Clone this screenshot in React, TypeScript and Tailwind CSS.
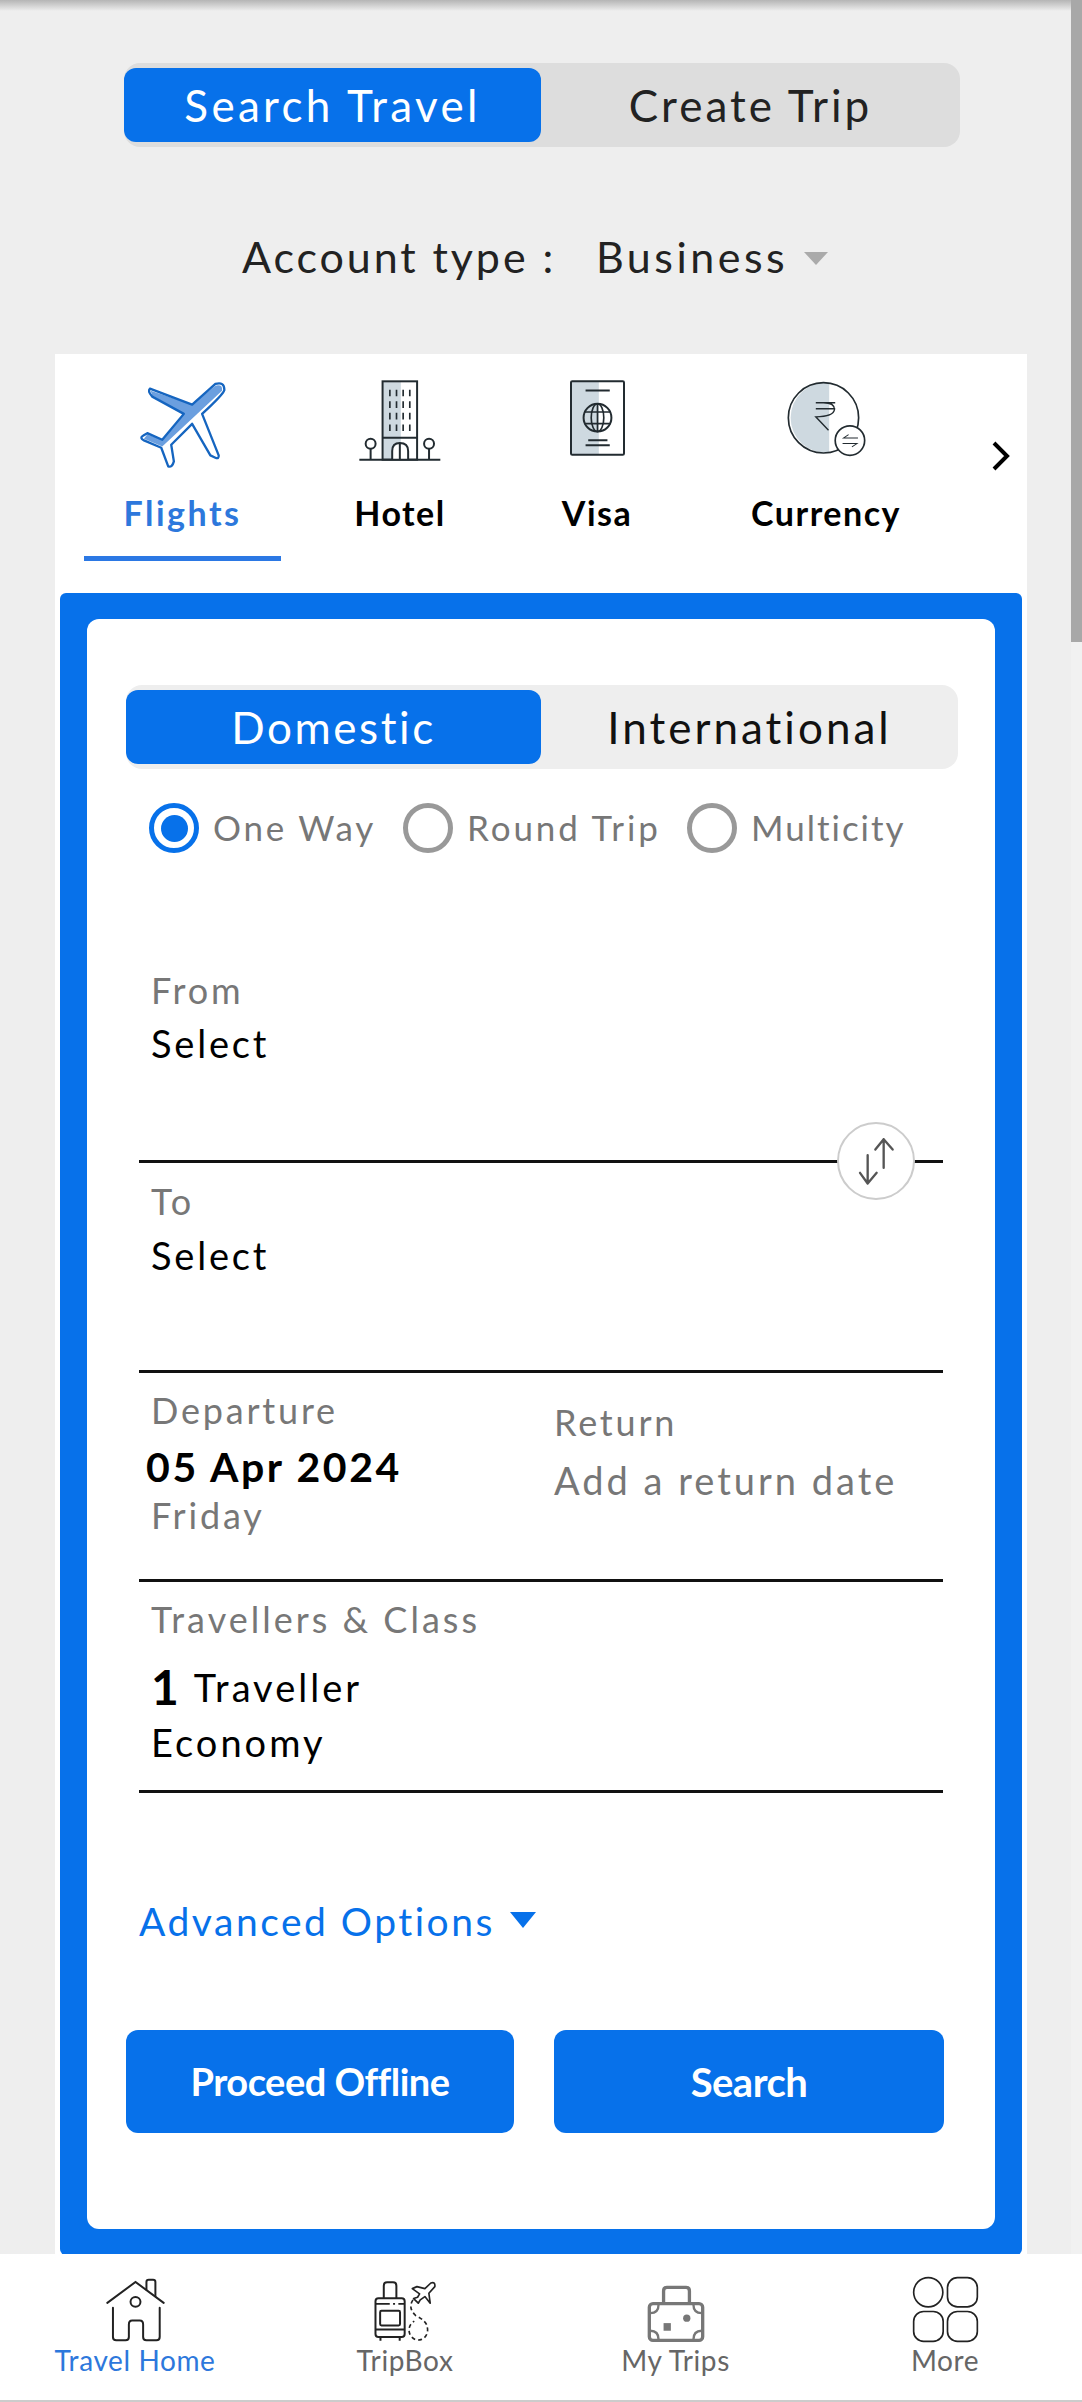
import { FC, ReactNode } from "react";

const PlaneIcon: FC = () => (
  <svg viewBox="115 58 265 268" className="h-[89px] w-[88px]">
    <path d="M150 90 L275 132 L345 75 Q368 70 365 90 L185 258 L130 235 L140 222 L185 238 L250 160 L155 105 Z" fill="#6b9fdf" />
    <path
      d="M345 70 Q372 62 372 88 Q370 100 305 160 L355 285 Q356 297 345 292 L330 285 L275 190 L212 253 L220 303 Q215 322 203 318 L182 262 L130 240 Q115 232 128 225 L140 218 L185 238 L250 160 L155 108 Q140 92 148 84 L275 132 Z"
      fill="none"
      stroke="#1565c0"
      strokeWidth="7"
      strokeLinejoin="round"
    />
  </svg>
);

const HotelIcon: FC = () => (
  <svg viewBox="778 58 245 244" className="h-[81px] w-[82px]" fill="none" stroke="#222b30" strokeWidth="6">
    <rect x="848" y="62" width="55" height="236" fill="#ced9e0" stroke="none" />
    <rect x="848" y="62" width="104" height="236" />
    <path d="M848 232 H952" />
    <path d="M870 87 V107 M890 87 V107 M910 87 V107 M930 87 V107 M870 122 V142 M890 122 V142 M910 122 V142 M930 122 V142 M870 157 V177 M890 157 V177 M910 157 V177 M930 157 V177 M870 192 V212 M890 192 V212 M910 192 V212 M930 192 V212" strokeWidth="5" />
    <path d="M877 298 V272 Q877 248 900 248 Q925 248 925 272 V298 M900 248 V298" fill="#ffffff" />
    <circle cx="812" cy="250" r="15" />
    <circle cx="988" cy="250" r="15" />
    <path d="M812 265 V298 M988 265 V298 M778 298 H1022" />
  </svg>
);

const VisaIcon: FC = () => (
  <svg viewBox="95 59 166 228" className="h-[76px] w-[55px]" fill="none" stroke="#222b30" strokeWidth="6">
    <rect x="98" y="62" width="84" height="222" fill="#ced9e0" stroke="none" />
    <rect x="98" y="62" width="160" height="222" rx="4" />
    <path d="M142 90 H215 M150 240 H208 M142 255 H215" />
    <circle cx="178" cy="172" r="42" />
    <ellipse cx="178" cy="172" rx="19" ry="42" strokeWidth="5" />
    <path d="M178 130 V214 M138 155 H218 M138 190 H218" strokeWidth="5" />
  </svg>
);

const CurrencyIcon: FC = () => (
  <svg viewBox="746 62 236 230" className="h-[77px] w-[79px]" fill="none" stroke="#222b30" strokeWidth="5">
    <path d="M872 70 A105 105 0 1 0 872 279 Z" fill="#ced9e0" stroke="none" />
    <circle cx="855" cy="175" r="105" />
    <path d="M832 130 H890 M832 148 H890 M855 130 Q888 130 888 150 Q885 172 832 172 L870 212" strokeWidth="4" />
    <circle cx="934" cy="243" r="44" fill="#ffffff" />
    <path d="M958 235 H915 L930 225 M912 252 H955 L940 262" strokeWidth="3" />
  </svg>
);

const SwapIcon: FC = () => (
  <svg viewBox="170 100 120 155" className="h-[52px] w-[40px]" fill="none" stroke="#555555" strokeWidth="7" strokeLinecap="round" strokeLinejoin="round">
    <path d="M253 198 V112 M228 143 L253 112 L280 143" />
    <path d="M205 160 V245 M182 213 L205 245 L232 213" />
  </svg>
);

const HomeIcon: FC = () => (
  <svg viewBox="130 45 190 200" className="h-[67px] w-[63px]" fill="none" stroke="#222222" strokeWidth="6" strokeLinecap="round">
    <path d="M140 125 L225 62 L310 125" />
    <path d="M258 85 V62 Q258 55 265 55 H278 Q285 55 285 62 V105" />
    <circle cx="225" cy="122" r="15" />
    <path d="M157 140 V228 Q157 238 167 238 H195 Q205 238 205 228 V190 Q205 178 215 178 H238 Q248 178 248 190 V228 Q248 238 258 238 H288 Q298 238 298 228 V140" />
  </svg>
);

const TripBoxIcon: FC = () => (
  <svg viewBox="938 48 192 190" className="h-[63px] w-[64px]" fill="none" stroke="#222222" strokeWidth="6">
    <path d="M970 103 V65 Q970 55 980 55 H998 Q1008 55 1008 65 V103" />
    <rect x="945" y="103" width="88" height="117" rx="9" />
    <path d="M945 120 H988 M998 120 H1004 M1014 120 H1033 M945 197 H1033 M960 220 V231 M1018 220 V231" />
    <rect x="959" y="141" width="60" height="44" rx="4" />
    <path d="M1112 57 Q1126 52 1124 68 L1106 88 L1110 118 L1094 98 L1080 108 L1074 118 L1060 104 L1072 100 L1078 90 L1056 74 L1070 68 L1094 74 Z" strokeWidth="5" strokeLinejoin="round" />
    <path d="M1058 108 Q1042 132 1066 155 Q1100 172 1101 190 A28 30 0 1 1 1062 172" strokeWidth="5" strokeDasharray="12 9" />
  </svg>
);

const MyTripsIcon: FC = () => (
  <svg viewBox="140 58 175 176" className="h-[59px] w-[58px]" fill="none" stroke="#777777" strokeWidth="10">
    <path d="M190 115 V78 Q190 67 200 67 H258 Q268 67 268 78 V115" />
    <rect x="147" y="116" width="161" height="111" rx="11" />
    <path d="M150 145 Q175 145 175 118 M305 145 Q280 145 280 118 M150 198 Q175 198 175 225 M305 198 Q280 198 280 225" strokeWidth="7" />
    <circle cx="260" cy="160" r="11" fill="#777777" stroke="none" />
    <rect x="190" y="175" width="22" height="23" fill="#777777" stroke="none" />
  </svg>
);

const MoreIcon: FC = () => (
  <svg viewBox="938 45 202 202" className="h-[67px] w-[67px]" fill="none" stroke="#222222" strokeWidth="5">
    <circle cx="987" cy="94" r="44" />
    <rect x="1045" y="50" width="90" height="88" rx="30" />
    <rect x="943" y="152" width="89" height="90" rx="30" />
    <rect x="1045" y="152" width="90" height="90" rx="30" />
  </svg>
);

const Radio: FC<{ active?: boolean; label: string; labelClass: string }> = ({ active, label, labelClass }) => (
  <>
    <span className={`flex h-[50px] w-[50px] shrink-0 items-center justify-center rounded-full border-[5px] ${active ? "border-[#0771ea]" : "border-[#999999]"}`}>
      {active && <span className="h-[27px] w-[27px] rounded-full bg-[#0771ea]" />}
    </span>
    <span className={`mb-[3px] ml-[14px] text-[35px] leading-[50px] whitespace-nowrap text-[#777777] ${labelClass}`}>{label}</span>
  </>
);

const TabItem: FC<{ icon: ReactNode; label: string; width: string; active?: boolean }> = ({ icon, label, width, active }) => (
  <div className={`flex shrink-0 flex-col items-center ${width}`}>
    <div className="flex h-[90px] items-start justify-center">{icon}</div>
    <div className={`mt-[23px] text-[34px] leading-[40px] font-bold ${active ? "tracking-[2.5px] text-[#2d78dc]" : "tracking-[1.5px] text-black"}`}>{label}</div>
    <div className={`mt-[23px] h-[5px] w-full ${active ? "bg-[#2b78e4]" : ""}`} />
  </div>
);

const NavItem: FC<{ icon: ReactNode; label: string; width: string; active?: boolean }> = ({ icon, label, width, active }) => (
  <div className={`flex shrink-0 flex-col items-center ${width}`}>
    <div className="flex h-[68px] items-end justify-center">{icon}</div>
    <div className={`-mt-[1px] text-[28px] leading-[36px] tracking-[0.6px] whitespace-nowrap ${active ? "text-[#2d78dc]" : "text-[#666666]"}`}>{label}</div>
  </div>
);

const App: FC = () => {
  return (
    <div className="flex h-[2402px] w-[1082px] flex-col overflow-hidden bg-[#eeeeee] font-['Lato',sans-serif]">
      <div className="flex min-h-0 flex-1">
        <div className="min-w-0 flex-1">
          <div className="h-[11px] bg-gradient-to-b from-[#b5b5b5] to-[#eeeeee]" />

          {/* trip type toggle */}
          <div className="mt-[52px] ml-[124px] flex h-[84px] w-[836px] items-center rounded-[16px] bg-[#dddddd]">
            <div className="flex h-[74px] w-[417px] items-center justify-center rounded-[12px] bg-[#0771ea] text-[44px] tracking-[3.3px] text-white">
              Search Travel
            </div>
            <div className="flex-1 text-center text-[44px] tracking-[3px] text-[#222222]">Create Trip</div>
          </div>

          {/* account type */}
          <div className="mt-[85px] flex h-[50px] items-center pl-[242px] text-[43px] tracking-[2.9px] text-[#222222]">
            <span className="w-[354px] whitespace-nowrap">Account type :</span>
            <span className="w-[208px] tracking-[3.5px]">Business</span>
            <span className="mt-[3px] h-0 w-0 border-x-[12px] border-t-[13px] border-x-transparent border-t-[#aaaaaa]" />
          </div>

          <div className="mt-[72px] ml-[55px] w-[972px] bg-white">
            {/* service tabs */}
            <div className="flex h-[234px] pt-[26px] pl-[29px]">
              <TabItem icon={<PlaneIcon />} label="Flights" width="w-[197px]" active />
              <TabItem icon={<HotelIcon />} label="Hotel" width="w-[238px]" />
              <TabItem icon={<VisaIcon />} label="Visa" width="w-[156px]" />
              <TabItem icon={<CurrencyIcon />} label="Currency" width="w-[302px]" />
              <svg viewBox="0 0 19 30" className="mt-[61px] ml-[14px] h-[30px] w-[19px]" fill="none" stroke="#000000" strokeWidth="4">
                <path d="M3 2 L16 15 L3 28" />
              </svg>
            </div>

            <div className="mx-[5px] mt-[5px] rounded-[6px] bg-[#0771ea] px-[27px] pt-[26px] pb-[26px]">
              <div className="rounded-[12px] bg-white pt-[66px] pb-[96px]">
                {/* domestic / international */}
                <div className="ml-[39px] flex h-[84px] w-[832px] items-center rounded-[16px] bg-[#eeeeee]">
                  <div className="flex h-[74px] w-[415px] items-center justify-center rounded-[12px] bg-[#0771ea] text-[44px] tracking-[2.6px] text-white">
                    Domestic
                  </div>
                  <div className="flex-1 text-center text-[44px] tracking-[3px] text-[#111111]">International</div>
                </div>

                <div className="mt-[34px] ml-[62px] flex h-[50px] items-center">
                  <Radio active label="One Way" labelClass="w-[190px] tracking-[2.8px]" />
                  <Radio label="Round Trip" labelClass="w-[220px] tracking-[2.9px]" />
                  <Radio label="Multicity" labelClass="w-[151px] tracking-[2px]" />
                </div>

                <div className="mt-[117px] ml-[52px] w-[804px]">
                  {/* from */}
                  <div className="relative h-[193px] border-b-[3px] border-[#111111] pl-[12px]">
                    <div className="text-[36px] leading-[40px] tracking-[2.8px] text-[#777777]">From</div>
                    <div className="mt-[13px] text-[38px] leading-[40px] tracking-[2.8px] text-black">Select</div>
                    <div className="absolute right-[28px] bottom-[-40px] flex h-[78px] w-[78px] items-center justify-center rounded-full border-2 border-[#cccccc] bg-white">
                      <SwapIcon />
                    </div>
                  </div>
                  {/* to */}
                  <div className="h-[210px] border-b-[3px] border-[#111111] pt-[18px] pl-[12px]">
                    <div className="text-[36px] leading-[40px] tracking-[2.8px] text-[#777777]">To</div>
                    <div className="mt-[14px] text-[38px] leading-[40px] tracking-[2.8px] text-black">Select</div>
                  </div>
                  {/* dates */}
                  <div className="flex h-[209px] border-b-[3px] border-[#111111]">
                    <div className="w-[415px] pt-[17px] pl-[12px]">
                      <div className="text-[36px] leading-[40px] tracking-[2.8px] text-[#777777]">Departure</div>
                      <div className="mt-[15px] -ml-[5px] text-[41px] leading-[44px] font-bold tracking-[2.6px] text-black">05 Apr 2024</div>
                      <div className="mt-[6px] text-[36px] leading-[40px] tracking-[2.8px] text-[#777777]">Friday</div>
                    </div>
                    <div className="pt-[29px]">
                      <div className="text-[36px] leading-[40px] tracking-[2.8px] text-[#777777]">Return</div>
                      <div className="mt-[18px] text-[38px] leading-[40px] tracking-[3px] text-[#777777]">Add a return date</div>
                    </div>
                  </div>
                  {/* travellers */}
                  <div className="h-[211px] border-b-[3px] border-[#111111] pt-[17px] pl-[12px]">
                    <div className="text-[36px] leading-[40px] tracking-[3px] text-[#777777]">Travellers &amp; Class</div>
                    <div className="mt-[23px] flex h-[50px] items-center text-black">
                      <span className="text-[48px] font-bold">1</span>
                      <span className="ml-[15px] text-[38px] tracking-[3px]">Traveller</span>
                    </div>
                    <div className="mt-[10px] text-[38px] leading-[40px] tracking-[3px] text-black">Economy</div>
                  </div>
                  {/* advanced options */}
                  <div className="mt-[108px] flex h-[40px] items-center text-[39px] tracking-[2.5px] text-[#0771ea]">
                    <span className="w-[371px] whitespace-nowrap">Advanced Options</span>
                    <span className="mb-[3px] h-0 w-0 border-x-[13px] border-t-[16px] border-x-transparent border-t-[#0771ea]" />
                  </div>
                </div>

                <div className="mt-[89px] ml-[39px] flex gap-[40px]">
                  <button className="flex h-[103px] w-[388px] items-center justify-center rounded-[12px] bg-[#0771ea] text-[38px] font-bold tracking-[-0.5px] text-white">
                    Proceed Offline
                  </button>
                  <button className="flex h-[103px] w-[390px] items-center justify-center rounded-[12px] bg-[#0771ea] text-[40px] font-bold tracking-[-0.5px] text-white">
                    Search
                  </button>
                </div>
              </div>
            </div>
          </div>
        </div>

        {/* scrollbar */}
        <div className="w-[11px] shrink-0 bg-[#f1f1f1]">
          <div className="h-[642px] bg-[#a8a8a8]" />
        </div>
      </div>

      {/* bottom nav */}
      <nav className="flex h-[148px] shrink-0 border-b-[2px] border-[#cccccc] bg-white pt-[21px]">
        <NavItem icon={<HomeIcon />} label="Travel Home" width="w-[270px]" active />
        <NavItem icon={<TripBoxIcon />} label="TripBox" width="w-[270px]" />
        <NavItem icon={<MyTripsIcon />} label="My Trips" width="w-[271px]" />
        <NavItem icon={<MoreIcon />} label="More" width="w-[268px]" />
      </nav>
    </div>
  );
};

export default App;
